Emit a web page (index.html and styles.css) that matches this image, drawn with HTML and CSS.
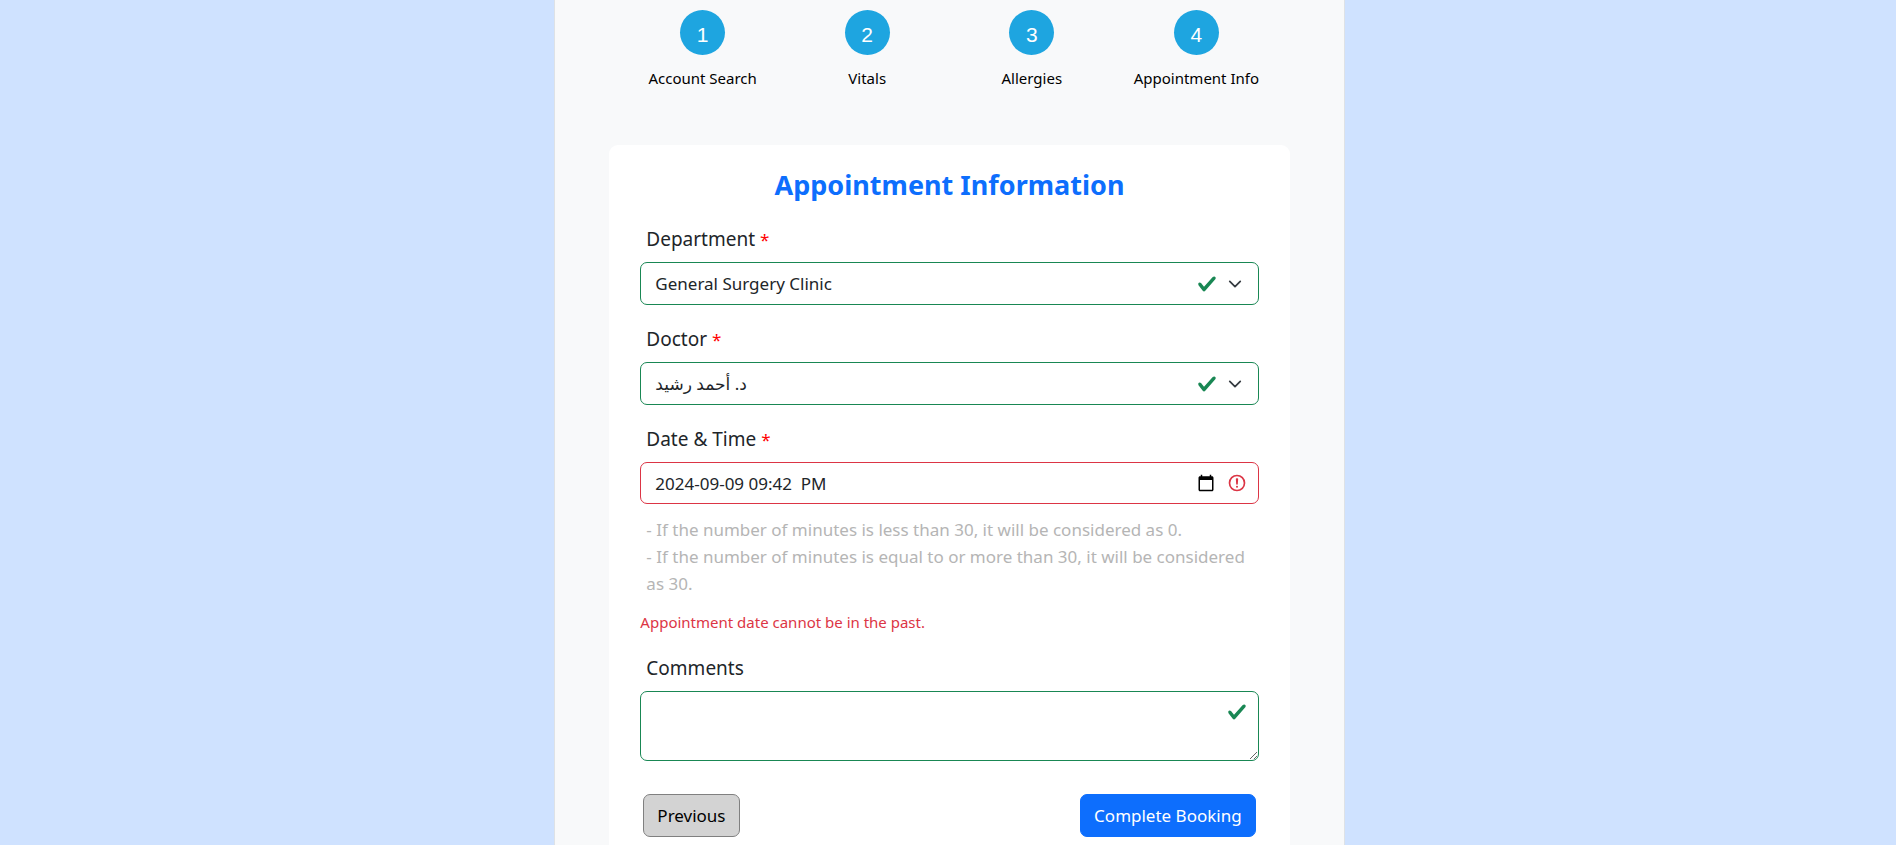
FILE: index.html
```html
<!DOCTYPE html>
<html lang="en">
<head>
<meta charset="utf-8">
<title>Appointment Information</title>
<link rel="stylesheet" href="styles.css">
</head>
<body>
<svg class="sprite" aria-hidden="true">
  <symbol id="check" viewBox="0 0 8 8"><path fill="#198754" d="M2.3 6.73.6 4.53c-.4-1.04.46-1.4 1.1-.8l1.1 1.4 3.4-3.8c.6-.63 1.6-.27 1.2.7l-4 4.6c-.43.5-.8.4-1.1.1z"/></symbol>
  <symbol id="chevron" viewBox="0 0 16 16"><path fill="none" stroke="#343a40" stroke-linecap="round" stroke-linejoin="round" stroke-width="2" d="m2 5 6 6 6-6"/></symbol>
  <symbol id="calendar" viewBox="0 0 24 24"><path d="M20 3h-1V1h-2v2H7V1H5v2H4c-1.100 0-2 .9-2 2v16c0 1.100.9 2 2 2h16c1.100 0 2-.9 2-2V5c0-1.100-.9-2-2-2zm0 18H4V8h16v13z"/></symbol>
  <symbol id="alert" viewBox="0 0 12 12"><circle cx="6" cy="6" r="4.500" fill="none" stroke="#dc3545"/><path fill="none" stroke="#dc3545" stroke-linejoin="round" d="M5.800 3.600h.4L6 6.500z"/><circle cx="6" cy="8.200" r=".6" fill="#dc3545"/></symbol>
</svg>
<main class="panel">
  <ol class="steps">
    <li class="step"><span class="step-number">1</span><span class="step-label">Account Search</span></li>
    <li class="step"><span class="step-number">2</span><span class="step-label">Vitals</span></li>
    <li class="step"><span class="step-number">3</span><span class="step-label">Allergies</span></li>
    <li class="step"><span class="step-number">4</span><span class="step-label">Appointment Info</span></li>
  </ol>
  <form class="card">
    <h1 class="title">Appointment Information</h1>
    <div class="field">
      <label class="label" for="department">Department <span class="required">*</span></label>
      <div class="control-wrap">
        <select class="control" id="department"><option>General Surgery Clinic</option></select>
        <span class="icons"><svg class="icon"><use href="#check"/></svg><svg class="icon-small"><use href="#chevron"/></svg></span>
      </div>
    </div>
    <div class="field">
      <label class="label" for="doctor">Doctor <span class="required">*</span></label>
      <div class="control-wrap">
        <select class="control" id="doctor"><option>د. أحمد رشيد</option></select>
        <span class="icons"><svg class="icon"><use href="#check"/></svg><svg class="icon-small"><use href="#chevron"/></svg></span>
      </div>
    </div>
    <div class="field">
      <label class="label" for="date">Date &amp; Time <span class="required">*</span></label>
      <div class="control-wrap">
        <input class="control invalid" id="date" type="text" value="2024-09-09 09:42  PM" aria-describedby="hint error">
        <span class="icons icons-date"><svg class="icon-calendar"><use href="#calendar"/></svg><svg class="icon"><use href="#alert"/></svg></span>
      </div>
      <p class="hint" id="hint">- If the number of minutes is less than 30, it will be considered as 0.<br>- If the number of minutes is equal to or more than 30, it will be considered as 30.</p>
      <p class="error" id="error">Appointment date cannot be in the past.</p>
    </div>
    <div class="field">
      <label class="label" for="comments">Comments</label>
      <div class="control-wrap">
        <textarea class="control comments" id="comments"></textarea>
        <span class="icons icons-top"><svg class="icon"><use href="#check"/></svg></span>
      </div>
    </div>
    <div class="actions">
      <button class="button" type="button">Previous</button>
      <button class="button primary" type="submit">Complete Booking</button>
    </div>
  </form>
</main>
</body>
</html>
```
FILE: styles.css
```css
* { box-sizing: border-box; }
html { scrollbar-width: none; }
body {
  margin: 0;
  padding-left: 3px;
  min-height: 100vh;
  display: flex;
  justify-content: center;
  background: #cfe2ff;
  color: #212529;
  font: 17px/27px "Noto Sans", "Open Sans", "DejaVu Sans", sans-serif;
}
.sprite { position: absolute; width: 0; height: 0; }
.panel {
  width: 41.75%;
  min-width: 600px;
  padding: 10px 54px 0;
  background: #f8f9fa;
  border: solid #dee2e6;
  border-width: 0 1px;
}
.steps {
  display: flex;
  margin: 0 11px 55px;
  padding: 0;
  list-style: none;
}
.step {
  flex: 1;
  display: flex;
  flex-direction: column;
  align-items: center;
  gap: 11px;
  color: #000;
}
.step-number {
  width: 45px;
  height: 45px;
  padding-top: 3px;
  border-radius: 50%;
  background: #1ea5e0;
  color: #fff;
  font: 21px/44px "Liberation Sans", Arial, sans-serif;
  text-align: center;
}
.step-label { font-size: 15px; line-height: 24px; white-space: nowrap; }
.card {
  padding: 22px 31px 8px;
  border-radius: 9px 9px 0 0;
  background: #fff;
}
.title {
  margin: 0 0 20px;
  color: #0d6efd;
  font-size: 27px;
  line-height: 36px;
  font-weight: 700;
  text-align: center;
}
.field { margin-bottom: 18px; }
.label {
  display: block;
  padding: 3px 6px 9px;
  font-size: 19px;
  line-height: 27px;
}
.required { color: #f00; font-size: 17px; }
.control-wrap { position: relative; }
.control {
  display: block;
  width: 100%;
  height: 43px;
  margin: 0;
  padding: 0 90px 0 14px;
  appearance: none;
  border: 1px solid #198754;
  border-radius: 7px;
  background: #fff;
  color: #212529;
  font: inherit;
}
.invalid { height: 42px; border-color: #dc3545; white-space: pre; }
.comments { height: 70px; resize: vertical; }
.icons {
  position: absolute;
  top: 0;
  right: 17px;
  height: 43px;
  display: flex;
  align-items: center;
  gap: 11px;
  pointer-events: none;
}
.icons-date { right: 12px; height: 42px; gap: 12px; }
.icons-top { right: 12px; height: 42px; }
.icon { width: 20px; height: 20px; }
.icon-small { width: 14px; height: 14px; }
.icon-calendar { width: 18px; height: 18px; }
.hint {
  margin: 0;
  padding: 12px 6px 0;
  color: #b5b5b5;
}
.error {
  margin: 13px 0 0;
  color: #dc3545;
  font-size: 15px;
  line-height: 24px;
}
.actions {
  display: flex;
  justify-content: space-between;
  padding: 15px 3px 0;
}
.button {
  height: 43px;
  padding: 0 13px;
  border: 1px solid #808080;
  border-radius: 7px;
  background: #d3d3d3;
  color: #000;
  font: inherit;
}
.primary { border-color: #0d6efd; background: #0d6efd; color: #fff; }
```
